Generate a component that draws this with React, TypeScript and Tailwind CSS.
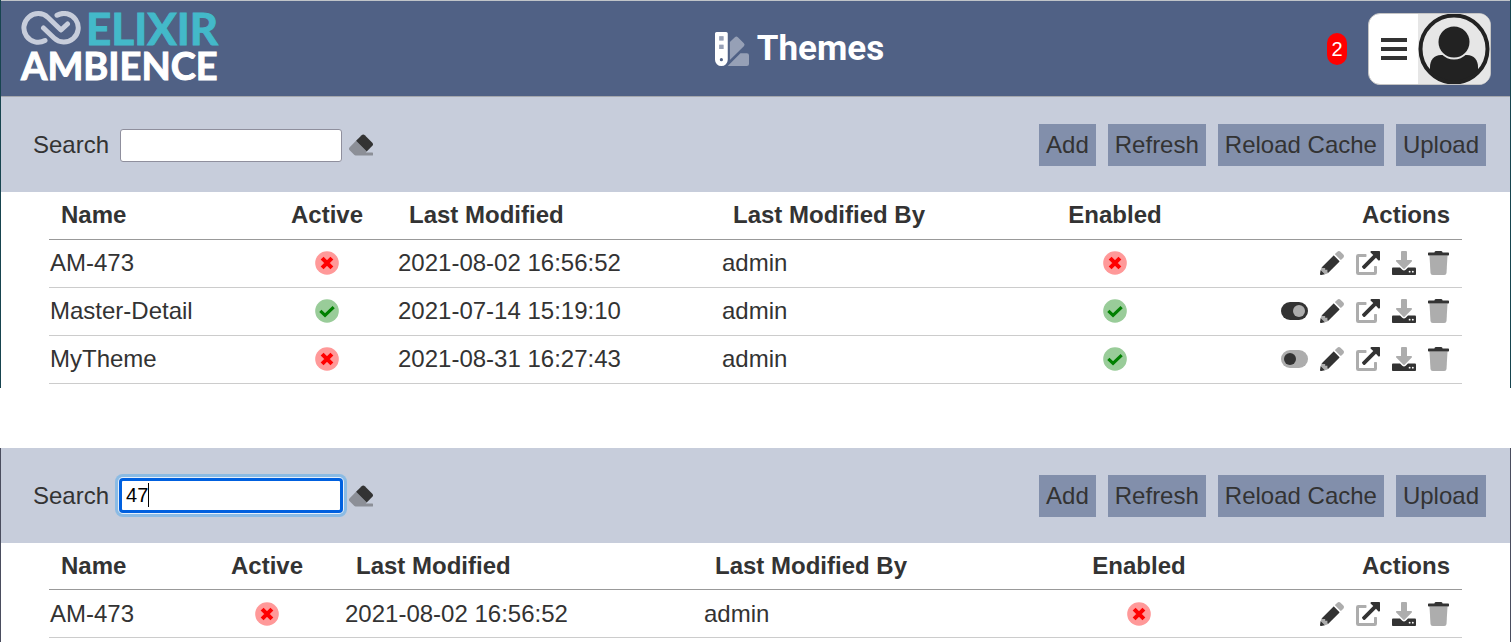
import { useState } from "react"
import type { ReactNode } from "react"

type Theme = {
    name: string
    active: boolean
    modified: string
    modifiedBy: string
    enabled: boolean
    toggle?: "on" | "off"
}

export default function App() {
    return (
        <div className="flex w-full flex-col gap-[60px] bg-white font-['Liberation_Sans',Arial,sans-serif] text-2xl text-[#333333]">
            <div className="border-x border-[#17444f]">
                <Header />
                <ThemesPanel id="all" columns={wideColumns} />
            </div>
            <div className="border-x border-[#4a4d5e]">
                <ThemesPanel id="filtered" columns={filteredColumns} initialQuery="47" highlighted />
            </div>
        </div>
    )
}

const Header = () => {
    return (
        <header className="flex items-center border-t border-b border-t-[#c0c4c8] border-b-[#a5a7ad] bg-[#506185] pr-[19px] pl-5">
            <Logo />
            <h1 className="flex flex-1 items-center justify-center gap-2 font-['Roboto',sans-serif] text-[35px] leading-10 font-bold text-white">
                <SwatchbookIcon />
                Themes
            </h1>
            <div className="flex items-center gap-[21px] pt-3 pb-[11px]">
                <span className="flex h-8 w-5 items-center justify-center rounded-[10px] bg-[#ff0000] text-xl text-white">2</span>
                <button
                    type="button"
                    aria-label="User menu"
                    className="flex overflow-hidden rounded-xl border border-[#c4c4c4] bg-white"
                >
                    <span className="flex w-[49px] items-center justify-center">
                        <svg viewBox="0 0 26 22" className="h-[70px] w-[26px]" fill="#333333" aria-hidden="true">
                            <path d="M0 0h26v4H0zM0 9h26v4H0zM0 18h26v4H0z" />
                        </svg>
                    </span>
                    <AvatarIcon />
                </button>
            </div>
        </header>
    )
}

const Logo = () => {
    return (
        <a href="#" className="flex w-[251px] flex-col self-start pt-[7px] font-['Lato',sans-serif] font-bold [-webkit-text-stroke:1px_currentColor]">
            <span className="flex items-center gap-[5px]">
                <svg viewBox="0 0 60 34" className="h-[34px] w-[60px]" fill="none" stroke="#c7cddb" strokeWidth="5" strokeLinecap="round" strokeLinejoin="round" aria-hidden="true">
                    <path d="M24 29.5A14.3 14.3 0 1 1 27 6.5L40 19L46.5 13" />
                    <path d="M36 4.2A14.3 14.3 0 1 1 33 27L22.5 17" />
                </svg>
                <span className="text-[44px] leading-10 text-[#43b9c9]">ELIXIR</span>
            </span>
            <span className="text-[38px] leading-[34px] text-white">AMBIENCE</span>
        </a>
    )
}

const ThemesPanel = ({
    id,
    columns,
    initialQuery = "",
    highlighted = false,
}: {
    id: string
    columns: string[]
    initialQuery?: string
    highlighted?: boolean
}) => {
    const [query, setQuery] = useState(initialQuery)
    const rows = themes.filter((theme) => theme.name.toLowerCase().includes(query.toLowerCase()))

    return (
        <section className="pb-1">
            <div className="flex items-center justify-between bg-[#c7cddb] pt-[27px] pr-6 pb-[26px] pl-8">
                <div className="flex items-center">
                    <label htmlFor={`search-${id}`} className="mr-[11px]">Search</label>
                    <div className="relative flex">
                        <input
                            id={`search-${id}`}
                            type="text"
                            value={query}
                            onChange={(e) => setQuery(e.target.value)}
                            className={`h-[33px] w-[222px] rounded-[3px] bg-white text-xl text-black outline-none ${highlighted
                                ? "border-2 border-[#0060df] px-1 shadow-[0_0_0_1px_#0060df,0_0_0_2px_#e6effa,0_0_0_5px_#8bbbe4]"
                                : "border border-[#8f8f9d] px-[5px]"
                                }`}
                        />
                        {/* Text caret */}
                        {highlighted && <span className="absolute top-1 left-7 h-6 w-px bg-black" />}
                    </div>
                    <button type="button" aria-label="Clear search" className="ml-[7px]" onClick={() => setQuery("")}>
                        <EraserIcon />
                    </button>
                </div>
                <div className="flex items-center gap-3">
                    {toolbarActions.map((action) => (
                        <button key={action} type="button" className="bg-[#828fab] px-[7px] py-[5px] leading-8">
                            {action}
                        </button>
                    ))}
                </div>
            </div>
            <div className="px-12">
                <table className="w-full table-fixed">
                    <colgroup>
                        {columns.map((width, i) => (
                            <col key={i} className={width} />
                        ))}
                    </colgroup>
                    <thead>
                        <tr className="h-[47px] border-b border-[#999999]">
                            <th className="px-3 text-left">Name</th>
                            <th className="px-3 text-center">Active</th>
                            <th className="px-3 text-left">Last Modified</th>
                            <th className="px-3 text-left">Last Modified By</th>
                            <th className="px-3 text-center">Enabled</th>
                            <th className="px-3 text-right">Actions</th>
                        </tr>
                    </thead>
                    <tbody>
                        {rows.map((theme) => (
                            <ThemeRow key={theme.name} theme={theme} />
                        ))}
                    </tbody>
                </table>
            </div>
        </section>
    )
}

const ThemeRow = ({ theme }: { theme: Theme }) => {
    return (
        <tr className="h-12 border-b border-[#cccccc]">
            <td className="px-px">{theme.name}</td>
            <td className="px-px"><StatusIcon ok={theme.active} /></td>
            <td className="px-px">{theme.modified}</td>
            <td className="px-px">{theme.modifiedBy}</td>
            <td className="px-px"><StatusIcon ok={theme.enabled} /></td>
            <td className="pr-[13px]">
                <div className="flex items-center justify-end gap-3">
                    {theme.toggle && (
                        <IconButton label={theme.toggle === "on" ? "Disable" : "Enable"}>
                            <ToggleIcon on={theme.toggle === "on"} />
                        </IconButton>
                    )}
                    <IconButton label="Edit"><PencilIcon /></IconButton>
                    <IconButton label="Open"><ExternalIcon /></IconButton>
                    <IconButton label="Download"><DownloadIcon /></IconButton>
                    <IconButton label="Delete"><TrashIcon /></IconButton>
                </div>
            </td>
        </tr>
    )
}

const IconButton = ({ label, children }: { label: string; children: ReactNode }) => {
    return (
        <button type="button" aria-label={label} className="block">
            {children}
        </button>
    )
}

const StatusIcon = ({ ok }: { ok: boolean }) => {
    return (
        <svg viewBox="0 0 512 512" className="mx-auto size-6" fill="none" role="img" aria-label={ok ? "Yes" : "No"}>
            <circle cx="256" cy="256" r="252" fill={ok ? "#99cc99" : "#ff9999"} />
            {ok ? (
                <path d="M114 254L214 350L398 174" stroke="#008000" strokeWidth="68" />
            ) : (
                <path d="M152 152L360 360M360 152L152 360" stroke="#ff0000" strokeWidth="88" />
            )}
        </svg>
    )
}

const ToggleIcon = ({ on }: { on: boolean }) => {
    return (
        <svg viewBox="0 0 576 512" className="h-6 w-[27px]" aria-hidden="true">
            <rect y="64" width="576" height="384" rx="192" fill={on ? "#333333" : "#adadad"} />
            <circle cx={on ? 384 : 192} cy="256" r="128" fill={on ? "#adadad" : "#333333"} />
        </svg>
    )
}

const PencilIcon = () => {
    return (
        <svg viewBox="0 0 512 512" className="size-6" fill="#333333" aria-hidden="true">
            <path
                fill="#adadad"
                d="M497.9 142.1l-46.1 46.1c-4.7 4.7-12.3 4.7-17 0l-111-111c-4.7-4.7-4.7-12.3 0-17l46.1-46.1c18.7-18.7 49.1-18.7 67.9 0l60.1 60.1c18.8 18.7 18.8 49.1 0 67.9zM34 350L14 406l92 92 56-20 14-90-50-10-14-50z"
            />
            <path d="M284.2 99.8L34 350l24 10h52v42h48v50l14 16 240.3-240.3c4.7-4.7 4.7-12.3 0-17l-111-111c-4.8-4.7-12.4-4.7-17.1 0z" />
            <path d="M14 406L.4 483.9c-2.9 16.4 11.4 30.6 27.8 27.8L106 498z" />
        </svg>
    )
}

const ExternalIcon = () => {
    return (
        <svg viewBox="0 0 512 512" className="size-6" fill="#333333" aria-hidden="true">
            <path
                fill="#adadad"
                d="M400 320h32a16 16 0 0 1 16 16v128a48 48 0 0 1-48 48H48a48 48 0 0 1-48-48V112a48 48 0 0 1 48-48h160a16 16 0 0 1 16 16v32a16 16 0 0 1-16 16H64v320h320V336a16 16 0 0 1 16-16z"
            />
            <path d="M496 0H330c-21 0-26 26-14 38l52 48L135 320a24 24 0 0 0 0 34L157.7 377a24 24 0 0 0 34 0L426 144l48 52c12 12 38 7 38-14V16a16 16 0 0 0-16-16z" />
        </svg>
    )
}

const DownloadIcon = () => {
    return (
        <svg viewBox="0 0 512 512" className="size-6" fill="#333333" aria-hidden="true">
            <path
                fill="#adadad"
                d="M216 0h80c13.3 0 24 10.7 24 24v168h87.7c17.8 0 26.7 21.5 14.1 34.1L269.7 378.3c-7.5 7.5-19.8 7.5-27.3 0L90.1 226.1c-12.6-12.6-3.7-34.1 14.1-34.1H192V24c0-13.3 10.7-24 24-24z"
            />
            <path
                fillRule="evenodd"
                d="M512 376v112c0 13.3-10.7 24-24 24H24c-13.3 0-24-10.7-24-24V376c0-13.3 10.7-24 24-24h146.7l49 49c20.1 20.1 52.5 20.1 72.6 0l49-49H488c13.3 0 24 10.7 24 24zM396 440a20 20 0 1 0-40 0 20 20 0 0 0 40 0zM464 440a20 20 0 1 0-40 0 20 20 0 0 0 40 0z"
            />
        </svg>
    )
}

const TrashIcon = () => {
    return (
        <svg viewBox="0 0 448 512" className="h-6 w-[21px]" fill="#333333" aria-hidden="true">
            <path fill="#adadad" d="M53.2 467a48 48 0 0 0 47.9 45h245.8a48 48 0 0 0 47.9-45L416 96H32z" />
            <path d="M432 32H312l-9.4-18.7A24 24 0 0 0 281.1 0H166.8a23.7 23.7 0 0 0-21.4 13.3L136 32H16A16 16 0 0 0 0 48v32a16 16 0 0 0 16 16h416a16 16 0 0 0 16-16V48a16 16 0 0 0-16-16z" />
        </svg>
    )
}

const EraserIcon = () => {
    return (
        <svg viewBox="0 0 512 512" className="size-6" aria-hidden="true">
            <path
                fill="#8c8f97"
                d="M150 166L14 302c-19 19-19 49 0 68l96 96a48 48 0 0 0 34 14h356c7 0 12-5 12-12v-40c0-7-5-12-12-12H356l22-22z"
            />
            <path
                fill="#333333"
                d="M498 274c19-19 19-49 0-68L338 46c-19-19-49-19-68 0L150 166l228 228z"
            />
        </svg>
    )
}

const SwatchbookIcon = () => {
    return (
        <svg viewBox="0 0 512 512" className="size-[34px]" fill="#ffffff" aria-hidden="true">
            <path
                opacity="0.4"
                d="M434.7 167.7l-90.5-90.5a32 32 0 0 0-45.2 0L224 152v271l210.7-210a32 32 0 0 0 0-45.3zM480 320h-96.6l-192 192H480a32 32 0 0 0 32-32V352a32 32 0 0 0-32-32z"
            />
            <path
                fillRule="evenodd"
                d="M24 0h144a24 24 0 0 1 24 24v392a96 96 0 0 1-192 0V24A24 24 0 0 1 24 0zM64 64v64h64V64zM64 192v64h64v-64zM120 416a24 24 0 1 0-48 0 24 24 0 0 0 48 0z"
            />
            <path opacity="0.4" d="M64 64h64v64H64zM64 192h64v64H64z" />
        </svg>
    )
}

const AvatarIcon = () => {
    return (
        <svg viewBox="0 0 72 70" className="h-[70px] w-[72px]" aria-hidden="true">
            <clipPath id="avatar-clip">
                <circle cx="36" cy="35" r="34" />
            </clipPath>
            <rect width="72" height="70" fill="#e6e6e6" />
            <g clipPath="url(#avatar-clip)">
                <path d="M12 70V53c0-7 4-12 11-12h26c7 0 11 5 11 12v17z" fill="#222222" />
                <circle cx="36" cy="28" r="17.5" fill="#e6e6e6" />
            </g>
            <circle cx="36" cy="28" r="15.5" fill="#222222" />
            <circle cx="36" cy="35" r="33.5" fill="none" stroke="#222222" strokeWidth="4" />
        </svg>
    )
}

const toolbarActions = ["Add", "Refresh", "Reload Cache", "Upload"]

// The "Last Modified By" column takes whatever width is left
const wideColumns = ["w-[208px]", "w-[140px]", "w-[324px]", "w-auto", "w-[140px]", "w-[277px]"]
const filteredColumns = ["w-[141px]", "w-[154px]", "w-[359px]", "w-auto", "w-[154px]", "w-[246px]"]

const themes: Theme[] = [
    { name: "AM-473", active: false, modified: "2021-08-02 16:56:52", modifiedBy: "admin", enabled: false },
    { name: "Master-Detail", active: true, modified: "2021-07-14 15:19:10", modifiedBy: "admin", enabled: true, toggle: "on" },
    { name: "MyTheme", active: false, modified: "2021-08-31 16:27:43", modifiedBy: "admin", enabled: true, toggle: "off" },
]
